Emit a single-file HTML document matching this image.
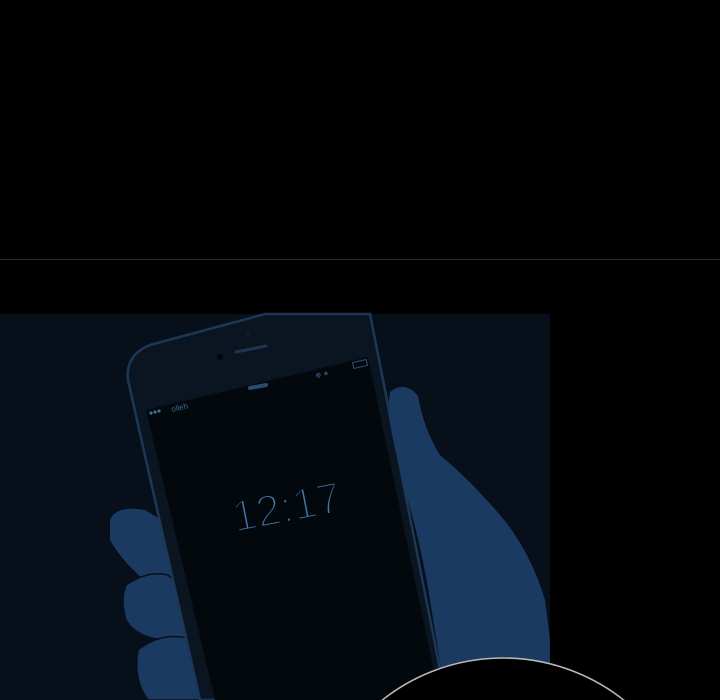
<!DOCTYPE html>
<html><head><meta charset="utf-8"><style>
html,body{margin:0;padding:0;background:#000;width:720px;height:700px;overflow:hidden}
svg{display:block}
</style></head><body>
<svg width="720" height="700" viewBox="0 0 720 700" xmlns="http://www.w3.org/2000/svg" style="overflow:hidden">
<rect width="720" height="700" fill="#000"/>
<rect x="0" y="259" width="720" height="1" fill="#2b2b2b"/>
<rect x="0" y="314" width="550" height="386" fill="#07101a"/>
<path d="M110,520 Q116,505 145,510 L170,525 L185,580 Q172,598 150,585 Q122,562 110,540 Z" fill="#1b3a61"/>
<path d="M126,585 Q148,570 168,575 L186,590 L192,625 Q192,642 170,640 Q138,640 126,620 Q120,600 126,585 Z" fill="#1b3a61" stroke="#07101a" stroke-width="1.5"/>
<path d="M138,650 Q160,632 188,638 L200,660 L207,700 L148,700 Q133,680 138,650 Z" fill="#1b3a61" stroke="#07101a" stroke-width="1.5"/>
<path d="M265,314 L370,314 L446,700 L200,700 L128,380 Q125,355 150,345 Z" fill="#0a1521" stroke="#1d3756" stroke-width="2.5"/>
<path d="M146,410 L368,357 L440,700 L215,700 Z" fill="#03080d"/>
<path d="M236,352 L266,346" stroke="#1d3554" stroke-width="3" stroke-linecap="round"/>
<circle cx="220" cy="357" r="3" fill="#030609"/>
<circle cx="248" cy="335" r="1.5" fill="#10202f"/>
<path d="M250,388 L266,385" stroke="#2a4c73" stroke-width="4" stroke-linecap="round"/>
<g fill="#3d6a9c" font-family="Liberation Sans, sans-serif" font-size="8">
<circle cx="151" cy="413" r="1.6"/><circle cx="155" cy="412" r="1.6"/><circle cx="159" cy="411" r="1.6"/>
<text x="172" y="412" transform="rotate(-13 172 412)">olleh</text>
<rect x="353" y="361" width="14" height="6" fill="none" stroke="#2d4f78" transform="rotate(-13 360 364)"/>
<text x="316" y="378" font-size="7" transform="rotate(-13 316 378)">⊕ ∗</text>
</g>
<text x="287" y="522" text-anchor="middle" font-family="Liberation Sans Narrow, Liberation Sans, sans-serif" font-size="44" fill="#4477b0" stroke="#03080d" stroke-width="2.4" transform="rotate(-11 287 510)">12:17</text>
<path d="M390,392 Q405,380 418,396 Q424,430 440,455 Q470,480 500,515 Q530,550 545,600 L550,640 L550,700 L446,700 L430,600 Q420,540 405,490 Q392,440 388,410 Z" fill="#1b3a61"/>
<circle cx="503" cy="852" r="194" fill="#000" stroke="#b8b8b8" stroke-width="1.5"/>
</svg>
</body></html>
